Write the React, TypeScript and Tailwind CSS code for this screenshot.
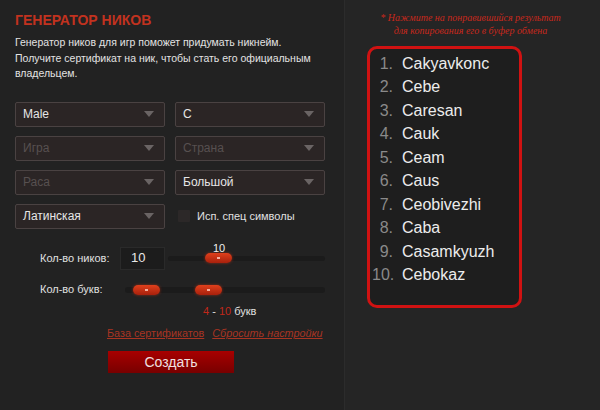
import React from 'react';

const names = [
  'Cakyavkonc',
  'Cebe',
  'Caresan',
  'Cauk',
  'Ceam',
  'Caus',
  'Ceobivezhi',
  'Caba',
  'Casamkyuzh',
  'Cebokaz',
];

const Select = ({ value, placeholder }: { value?: string; placeholder?: string }) => (
  <div className="h-[25px] flex items-center justify-between pl-[7px] pr-[10px] rounded-[2px] border border-[#4a4242] bg-[#2b2525]">
    <span className={value ? 'text-[12px] text-[#e6e6e6]' : 'text-[12px] text-[#575050]'}>
      {value || placeholder}
    </span>
    <span className="w-0 h-0 border-l-[5px] border-r-[5px] border-t-[6px] border-l-transparent border-r-transparent border-t-[#6a6464]" />
  </div>
);

const Thumb = ({ left }: { left: number }) => (
  <div
    className="absolute top-1/2 -translate-y-1/2 w-[27px] h-[10px] rounded-full bg-gradient-to-b from-[#e0401c] to-[#a8200c] shadow-[0_0_3px_rgba(255,60,20,0.5)] flex items-center justify-center"
    style={{ left }}
  >
    <span className="w-[3px] h-[2px] bg-[#f6b0a0]" />
  </div>
);

export default function App() {
  return (
    <div
      className="w-[600px] h-[410px] flex bg-[#222222] overflow-hidden"
      style={{ fontFamily: '"Liberation Sans", Arial, sans-serif' }}
    >
      {/* левая колонка */}
      <div className="w-[345px] pl-[15px] pr-[19px] pt-[12px] flex flex-col border-r border-[#2c2c2c]">
        <h1 className="text-[14px] font-bold text-[#c2321f] leading-[17px]">ГЕНЕРАТОР НИКОВ</h1>
        <p className="mt-[6px] text-[10.5px] leading-[15.5px] text-[#e2e2e2]">
          Генератор ников для игр поможет придумать никнейм.
          <br />
          Получите сертификат на ник, чтобы стать его официальным
          <br />
          владельцем.
        </p>

        <div className="mt-[20px] grid grid-cols-2 gap-x-[10px] gap-y-[9px]">
          <Select value="Male" />
          <Select value="C" />
          <Select placeholder="Игра" />
          <Select placeholder="Страна" />
          <Select placeholder="Раса" />
          <Select value="Большой" />
          <Select value="Латинская" />
          <div className="flex items-center pl-[3px] gap-[7px]">
            <span className="w-[12px] h-[12px] bg-[#2c2828] rounded-[1px]" />
            <span className="text-[11px] text-[#e0e0e0]">Исп. спец символы</span>
          </div>
        </div>

        <div className="mt-[18px] flex items-center h-[23px]">
          <span className="w-[105px] pl-[25px] text-[11px] text-[#e0e0e0] whitespace-nowrap">Кол-во ников:</span>
          <div className="w-[45px] h-[23px] bg-[#1c1c1c] border border-[#2a2a2a] flex items-center pl-[10px] text-[13px] text-[#e8e8e8]">
            10
          </div>
          <div className="relative flex-1 ml-[3px] h-[5px] rounded-full bg-[#1b1b1b]">
            <Thumb left={37} />
            <span className="absolute left-[45px] -top-[16px] text-[11px] text-[#eeeeee]">10</span>
          </div>
        </div>

        <div className="mt-[10px] flex items-center h-[20px]">
          <span className="w-[110px] pl-[25px] text-[11px] text-[#e0e0e0] whitespace-nowrap">Кол-во букв:</span>
          <div className="relative flex-1 h-[6px] rounded-full bg-[#1b1b1b]">
            <Thumb left={8} />
            <Thumb left={70} />
          </div>
        </div>

        <div className="mt-[3px] pl-[188px] text-[11px] text-[#e0e0e0]">
          <span className="text-[#c0281a]">4</span> - <span className="text-[#c0281a]">10</span> букв
        </div>

        <div className="mt-[6px] pl-[92px] flex gap-[8px] text-[10.8px] text-[#a83422] whitespace-nowrap">
          <span className="underline">База сертификатов</span>
          <span className="underline italic">Сбросить настройки</span>
        </div>

        <button className="mt-[10px] ml-[93px] w-[126px] h-[22px] bg-gradient-to-b from-[#a80000] to-[#780000] text-[14px] text-[#f0e0e0] leading-none">
          Создать
        </button>
      </div>

      {/* правая колонка */}
      <div className="flex-1 flex flex-col bg-[#252525] pt-[11px]">
        <p
          className="text-[10px] leading-[13px] italic text-[#c8281c] text-center pr-[4px]"
          style={{ fontFamily: '"Liberation Serif", "Times New Roman", serif' }}
        >
          * Нажмите на понравившийся результат
          <br />
          для копирования его в буфер обмена
        </p>
        <div className="mt-[9px] ml-[22px] w-[155px] h-[262px] border-[3px] border-[#d01212] rounded-[10px] bg-[#1e1e1e] pt-[3px] pl-[2px]">
          <ol className="flex flex-col">
            {names.map((n, i) => (
              <li key={n} className="h-[23.5px] flex items-center text-[16px]">
                <span className="w-[21px] text-right text-[#8a8a8a]">{i + 1}.</span>
                <span className="ml-[9px] text-[#ececec]">{n}</span>
              </li>
            ))}
          </ol>
        </div>
      </div>
    </div>
  );
}
